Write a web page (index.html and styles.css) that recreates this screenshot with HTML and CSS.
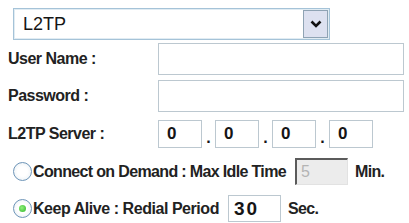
FILE: index.html
```html
<!DOCTYPE html>
<html lang="en">
<head>
    <meta charset="UTF-8">
    <title>L2TP</title>
    <link rel="stylesheet" href="styles.css">
</head>
<body>
    <div class="form">
        <div class="select">
            <span class="selectText">L2TP</span>
            <span class="selectBtn">
                <svg width="12" height="8" viewBox="0 0 12 8"><path d="M1.5 1.5 L6 6 L10.5 1.5" fill="none" stroke="#111" stroke-width="2.6" stroke-linejoin="miter"/></svg>
            </span>
        </div>

        <div class="row rowUser">
            <span class="label">User Name :</span>
            <input class="textInput" type="text">
        </div>

        <div class="row rowPass">
            <span class="label">Password :</span>
            <input class="textInput" type="password">
        </div>

        <div class="row rowServer">
            <span class="label">L2TP Server :</span>
            <input class="ipBox" type="text" value="0">
            <span class="dot">.</span>
            <input class="ipBox" type="text" value="0">
            <span class="dot">.</span>
            <input class="ipBox" type="text" value="0">
            <span class="dot">.</span>
            <input class="ipBox" type="text" value="0">
        </div>

        <div class="row rowRadio rowConnect">
            <span class="radio"></span>
            <span class="text">Connect on Demand : Max Idle Time</span>
            <input class="smallBox idleBox" type="text" value="5" disabled>
            <span class="text unit">Min.</span>
        </div>

        <div class="row rowRadio rowKeep">
            <span class="radio checked"></span>
            <span class="text keepText">Keep Alive : Redial Period</span>
            <input class="smallBox redialBox" type="text" value="30">
            <span class="text unit">Sec.</span>
        </div>
    </div>
</body>
</html>
```

FILE: styles.css
```css
* {
    margin: 0;
    padding: 0;
    box-sizing: border-box;
}
body {
    background: #fff;
    color: #151515;
    font-family: "Liberation Sans", Arial, sans-serif;
}
.form {
    width: 409px;
    padding: 8px 5px 0 8px;
}
.select {
    display: flex;
    width: 317px;
    height: 32px;
    margin-left: 5px;
    border: 1px solid #a5c3d8;
    box-shadow: inset 0 0 0 1px #e1ecf3;
}
.selectText {
    flex: 1;
    font-size: 18px;
    line-height: 30px;
    padding-left: 9px;
}
.selectBtn {
    width: 25px;
    margin: 1px;
    border: 1px solid #8fa3b4;
    background: #dde1f0;
    display: flex;
    align-items: center;
    justify-content: center;
}
.row {
    display: flex;
    align-items: center;
}
.label,
.text {
    font-size: 16px;
    font-weight: bold;
    letter-spacing: -0.5px;
    color: #222;
}
.text {
    letter-spacing: -0.65px;
}
.keepText {
    letter-spacing: -0.45px;
}
.label {
    width: 150px;
}
input {
    font-family: "Liberation Sans", Arial, sans-serif;
    color: #151515;
    background: #fff;
    outline: none;
}
.textInput {
    width: 246px;
    height: 32px;
    border: 1px solid #bcc8d0;
}
.rowUser {
    margin-top: 3px;
}
.rowPass {
    margin-top: 5px;
}
.rowServer {
    margin-top: 8px;
    height: 28px;
}
.ipBox {
    width: 44px;
    height: 28px;
    border: 1px solid #bcc8d0;
    font-size: 17px;
    font-weight: bold;
    padding-left: 8px;
}
.dot {
    width: 13px;
    text-align: center;
    font-size: 16px;
    font-weight: bold;
    padding-top: 8px;
}
.rowRadio {
    margin-top: 10px;
    height: 27px;
}
.radio {
    width: 19px;
    height: 19px;
    margin-left: 5px;
    margin-right: 1px;
    border-radius: 50%;
    border: 1.5px solid #6e95b8;
    background: radial-gradient(circle, #ffffff 40%, #e4ecf2 100%);
    position: relative;
}
.radio.checked::after {
    content: "";
    position: absolute;
    left: 4.5px;
    top: 4.5px;
    width: 7px;
    height: 7px;
    border-radius: 50%;
    background: radial-gradient(circle at 40% 40%, #8ff07a, #2fb52a);
}
.smallBox {
    width: 53px;
    height: 27px;
}
.idleBox {
    margin-left: 9px;
    border-top: 2px solid #5b5b5b;
    border-left: 2px solid #5b5b5b;
    border-right: 1px solid #e2e2e2;
    border-bottom: 1px solid #e2e2e2;
    background: #ececec;
    color: #b4b4b4;
    font-size: 16px;
    padding-left: 4px;
}
.redialBox {
    margin-left: 9px;
    border: 1px solid #bcc8d0;
    font-size: 19px;
    font-weight: bold;
    letter-spacing: 2px;
    padding-left: 5px;
}
.unit {
    margin-left: 7px;
}
```
